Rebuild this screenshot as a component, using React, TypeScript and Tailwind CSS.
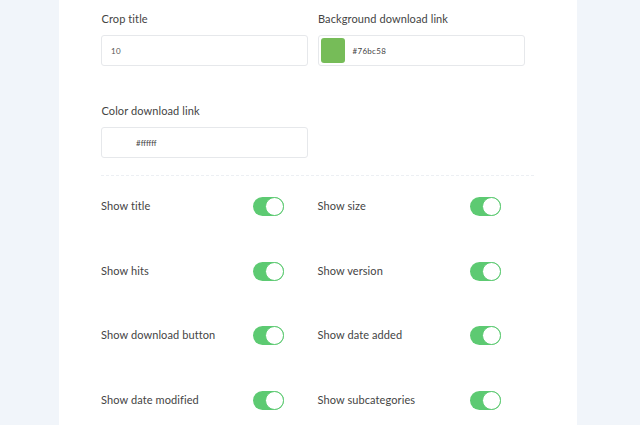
const toggles = [
  ["Show title", "Show size"],
  ["Show hits", "Show version"],
  ["Show download button", "Show date added"],
  ["Show date modified", "Show subcategories"],
];

function Toggle() {
  return (
    <div className="relative w-[31px] h-[19px] rounded-full bg-[#5dca72]">
      <div className="absolute right-0 top-0 w-[19px] h-[19px] rounded-full bg-white border border-[#5dca72]" />
    </div>
  );
}

function Field({ label, children }: { label: string; children: React.ReactNode }) {
  return (
    <div className="flex flex-col">
      <div className="h-[14px] leading-[14px] text-[11px] tracking-[0.1px] text-[#444] mb-[9px] pl-[0.5px]">{label}</div>
      <div className="w-[207px] h-[31px] border border-[#e6e8eb] rounded-[3px] bg-white flex items-center">{children}</div>
    </div>
  );
}

export default function App() {
  return (
    <div className="w-full h-[425px] bg-[#f1f5fa] overflow-hidden font-['Lato',sans-serif]">
      <div className="ml-[59px] w-[518px] h-full bg-white pl-[42px] pr-[43px] pt-[12px]">
        <div className="grid grid-cols-2 gap-y-[38px]">
          <Field label="Crop title">
            <span className="pl-[9px] text-[8px] text-[#555] tracking-[0.3px]">10</span>
          </Field>
          <Field label="Background download link">
            <div className="ml-[2px] w-[24px] h-[25px] rounded-[3px] bg-[#76bc58]" />
            <span className="ml-[8px] text-[8px] text-[#444] tracking-[0.3px]">#76bc58</span>
          </Field>
          <Field label="Color download link">
            <span className="pl-[34px] text-[8px] text-[#444]">#ffffff</span>
          </Field>
        </div>

        <div className="mt-[17px] border-t border-dashed border-[#eceff3]" />

        <div className="grid grid-cols-2 gap-y-[45.5px] mt-[21px]">
          {toggles.flat().map((label) => (
            <div key={label} className="w-[183px] h-[19px] flex items-center justify-between">
              <span className="text-[11px] tracking-[0.1px] text-[#444]">{label}</span>
              <Toggle />
            </div>
          ))}
        </div>
      </div>
    </div>
  );
}
